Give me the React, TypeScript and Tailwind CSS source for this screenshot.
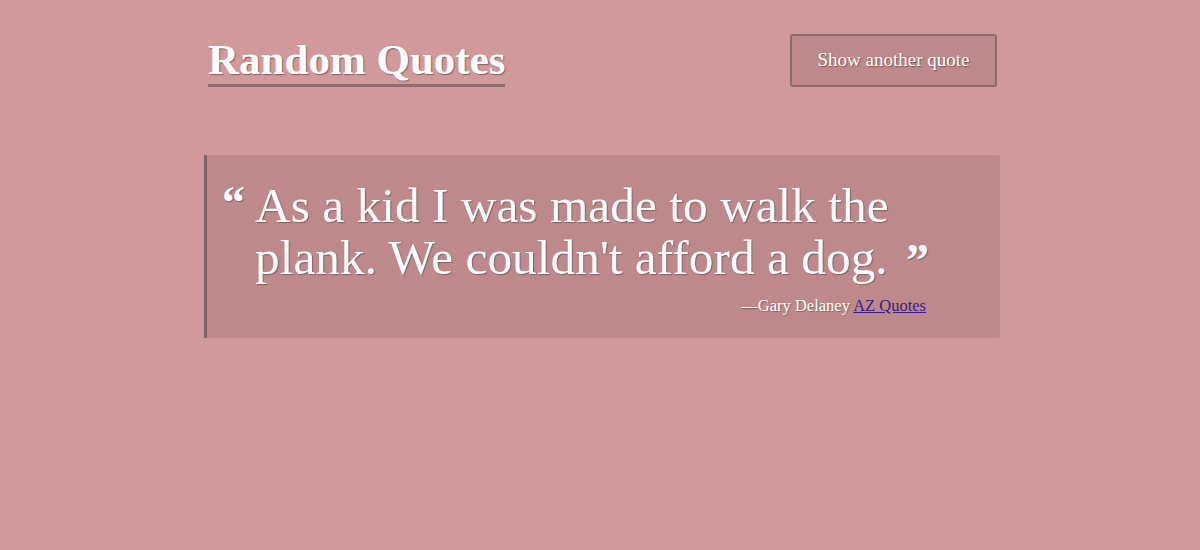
import React from "react";

export default function App() {
  const serif = { fontFamily: '"Liberation Serif", "DejaVu Serif", serif' };
  return (
    <div className="min-h-[550px] w-full bg-[#d09a9b]" style={serif}>
      <div className="w-[796px] pt-[34px] ml-[204px]">
        <div className="flex items-end justify-between">
          <h1 className="ml-[4px] border-b-[3px] border-[#8c6e70] text-[43px] font-bold leading-[48px] text-white [text-shadow:1px_1px_1px_#8a5f61]">
            Random Quotes
          </h1>
          <button className="mr-[3px] h-[53px] w-[207px] rounded-[3px] border-2 border-[#8d6b6d] bg-[#bd898a] text-[19px] text-white [text-shadow:1px_1px_1px_#7d5557]">
            Show another quote
          </button>
        </div>
        <blockquote className="mt-[68px] rounded-r-[3px] border-l-[3px] border-[#7e6264] bg-[#bd898a] pb-[22px] pl-[15px] pr-[60px] pt-[25px] text-white [text-shadow:1px_1px_1px_#8a5f61]">
          <div className="flex">
            <span className="mr-[10px] mt-[3px] w-[23px] text-[46px] font-bold leading-[40px]">&ldquo;</span>
            <p className="text-[49.4px] leading-[52px]">
              As a kid I was made to walk the plank. We couldn't afford a dog.{" "}
              <span className="relative top-[2px] ml-[6px] text-[46px] font-bold leading-[0]">&rdquo;</span>
            </p>
          </div>
          <div className="mt-[12px] pr-[14px] text-right text-[16.5px] leading-[20px]">
            &mdash;Gary Delaney{" "}
            <a href="#" className="text-[#3b1b86] underline [text-shadow:none]">
              AZ Quotes
            </a>
          </div>
        </blockquote>
      </div>
    </div>
  );
}
